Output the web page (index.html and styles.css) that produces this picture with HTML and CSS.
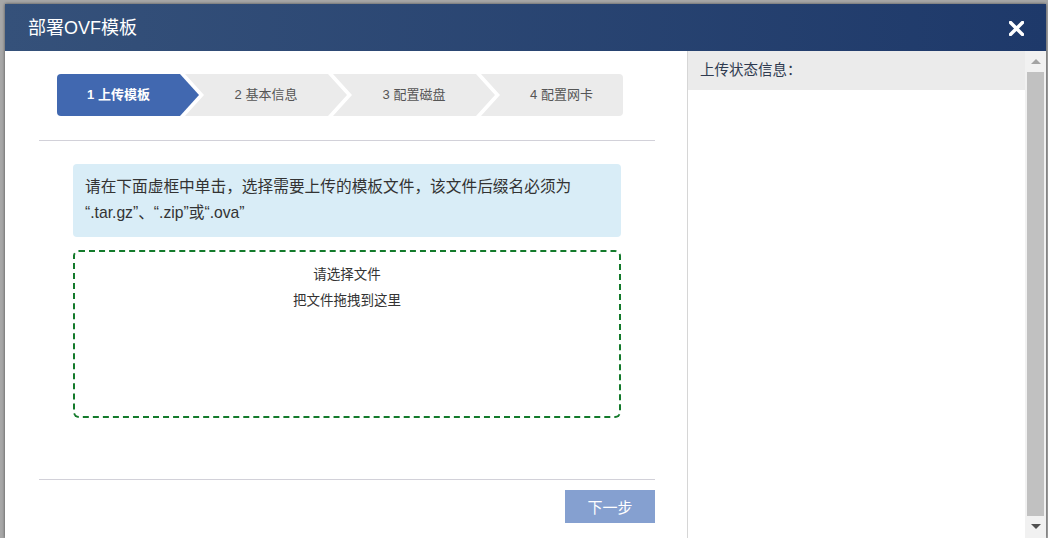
FILE: index.html
```html
<!DOCTYPE html>
<html>
    <head>
        <meta charset="UTF-8">
        <title>部署OVF模板</title>
        <link rel="stylesheet" href="styles.css">
    </head>
    <body>
        <div class="dialog">
            <div class="dialog-header">
                <span class="dialog-title">部署OVF模板</span>
                <span class="dialog-close">
                    <svg width="15" height="15" viewBox="0 0 15 15">
                        <path d="M1.5 1.5 L13.5 13.5 M13.5 1.5 L1.5 13.5" stroke="#fff" stroke-width="3.4" stroke-linecap="square"/>
                    </svg>
                </span>
            </div>
            <div class="dialog-body">
                <div class="wizard">
                    <ul class="steps">
                        <li class="step active">1 上传模板</li>
                        <li class="step">2 基本信息</li>
                        <li class="step">3 配置磁盘</li>
                        <li class="step">4 配置网卡</li>
                    </ul>
                    <div class="divider"></div>
                    <div class="tip">请在下面虚框中单击，选择需要上传的模板文件，该文件后缀名必须为 “.tar.gz”、“.zip”或“.ova”</div>
                    <div class="dropzone">
                        <p>请选择文件</p>
                        <p>把文件拖拽到这里</p>
                    </div>
                    <div class="divider bottom"></div>
                    <div class="footer">
                        <button class="btn-next">下一步</button>
                    </div>
                </div>
                <div class="status">
                    <div class="status-head">上传状态信息：</div>
                    <div class="status-log"></div>
                </div>
                <div class="scrollbar">
                    <span class="arrow up"></span>
                    <span class="thumb"></span>
                    <span class="arrow down"></span>
                </div>
            </div>
        </div>
    </body>
</html>
```

FILE: styles.css
```css
* {
    box-sizing: border-box;
}

body {
    margin: 0;
    height: 538px;
    overflow: hidden;
    background-color: #a7a7a7;
    padding: 4px 0 0 5px;
    font-family: "Liberation Sans", "Noto Sans CJK SC", sans-serif;
    color: #333;
}

.dialog {
    width: 1041px;
    height: 534px;
    background-color: #fff;
    box-shadow: 0 0 3px rgba(0, 0, 0, .55);
    display: flex;
    flex-direction: column;
}

.dialog-header {
    height: 47px;
    background: linear-gradient(to right, #35517a, #1e396a);
    display: flex;
    align-items: center;
    justify-content: space-between;
    padding: 0 22px 0 23px;
}

.dialog-title {
    color: #fff;
    font-size: 18px;
    line-height: 24px;
}

.dialog-close {
    display: flex;
    margin-top: 1px;
}

.dialog-body {
    flex: 1;
    display: flex;
}

/* left side: the wizard */
.wizard {
    width: 683px;
    border-right: 1px solid #d6d6d6;
    padding: 0 32px 0 34px;
}

.steps {
    list-style: none;
    margin: 23px 0 0 18px;
    padding: 0;
    display: flex;
    height: 42px;
}

.step {
    width: 162px;
    height: 42px;
    margin-left: -14px;
    line-height: 42px;
    text-align: center;
    font-size: 13px;
    color: #555;
    background-color: #ebebeb;
    clip-path: polygon(0 0, calc(100% - 19px) 0, 100% 50%, calc(100% - 19px) 100%, 0 100%, 19px 50%);
}

.step:first-child {
    width: 142px;
    margin-left: 0;
    padding-right: 19px;
    border-radius: 4px 0 0 4px;
    clip-path: polygon(0 0, calc(100% - 19px) 0, 100% 50%, calc(100% - 19px) 100%, 0 100%);
}

.step:last-child {
    width: 142px;
    padding-left: 19px;
    border-radius: 0 4px 4px 0;
    clip-path: polygon(0 0, 100% 0, 100% 100%, 0 100%, 19px 50%);
}

.step.active {
    background-color: #4168b0;
    color: #fff;
    font-weight: bold;
}

.divider {
    height: 1px;
    background-color: #d2d1d9;
    margin-top: 24px;
}

.divider.bottom {
    margin-top: 61px;
}

.tip {
    width: 548px;
    margin: 23px 0 0 34px;
    padding: 10px 12px 11px;
    background-color: #d9edf7;
    border-radius: 4px;
    font-size: 15.7px;
    line-height: 26px;
    color: #333;
}

.dropzone {
    width: 548px;
    height: 168px;
    margin: 13px 0 0 34px;
    border: 2px dashed #137a2b;
    border-radius: 6px;
    padding-top: 10px;
    text-align: center;
    font-size: 13.5px;
    line-height: 26px;
}

.dropzone p {
    margin: 0;
}

.footer {
    display: flex;
    justify-content: flex-end;
    padding-top: 10px;
}

.btn-next {
    width: 90px;
    height: 33px;
    border: none;
    background-color: #85a0d0;
    color: #fff;
    font-family: inherit;
    font-size: 15px;
    cursor: pointer;
}

/* right side: upload status */
.status {
    width: 337px;
}

.status-head {
    height: 39px;
    line-height: 39px;
    padding-left: 12px;
    background-color: #ebebeb;
    font-size: 14.5px;
    color: #2f3a4f;
}

.scrollbar {
    width: 21px;
    background-color: #f1f1f1;
    display: flex;
    flex-direction: column;
    align-items: center;
}

.thumb {
    width: 17px;
    height: 444px;
    background-color: #c1c1c1;
}

.arrow {
    width: 0;
    height: 0;
    border-left: 5px solid transparent;
    border-right: 5px solid transparent;
}

.arrow.up {
    border-bottom: 5px solid #a3a3a3;
    margin: 8px 0 8px;
}

.arrow.down {
    border-top: 5px solid #505050;
    margin-top: 8px;
}
```
